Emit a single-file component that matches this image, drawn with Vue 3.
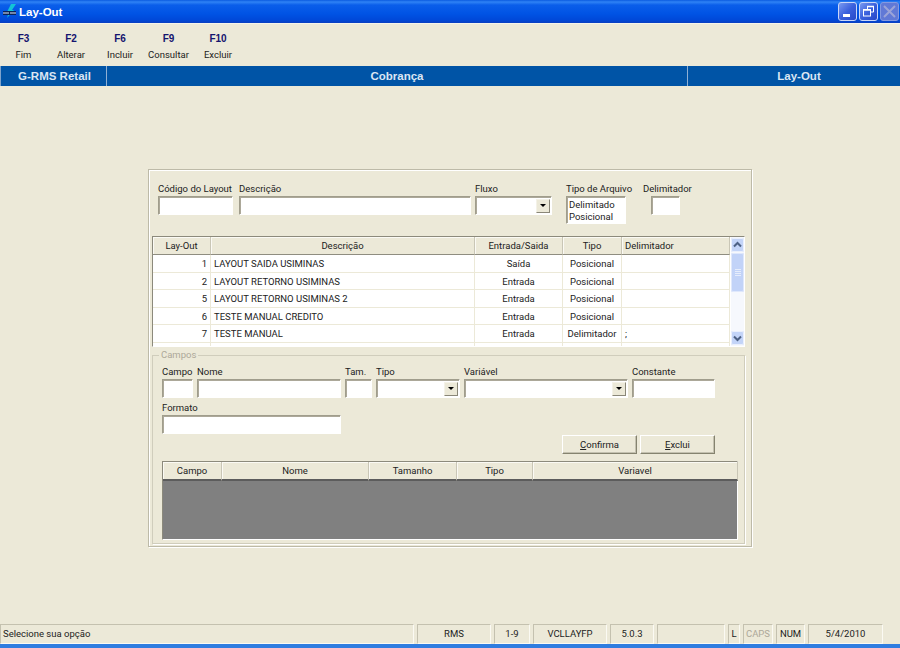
<script setup>
const tools = [
  { key: 'F3', label: 'Fim', w: 47 },
  { key: 'F2', label: 'Alterar', w: 48 },
  { key: 'F6', label: 'Incluir', w: 50 },
  { key: 'F9', label: 'Consultar', w: 47 },
  { key: 'F10', label: 'Excluir', w: 52 },
]
const layoutCols = [
  { t: 'Lay-Out', w: 58 },
  { t: 'Descrição', w: 264 },
  { t: 'Entrada/Saida', w: 88 },
  { t: 'Tipo', w: 59 },
  { t: 'Delimitador', w: 108, left: true },
]
const layoutRows = [
  ['1', 'LAYOUT SAIDA USIMINAS', 'Saída', 'Posicional', ''],
  ['2', 'LAYOUT RETORNO USIMINAS', 'Entrada', 'Posicional', ''],
  ['5', 'LAYOUT RETORNO USIMINAS 2', 'Entrada', 'Posicional', ''],
  ['6', 'TESTE MANUAL CREDITO', 'Entrada', 'Posicional', ''],
  ['7', 'TESTE MANUAL', 'Entrada', 'Delimitador', ';'],
]
const fieldCols = [
  { t: 'Campo', w: 59 },
  { t: 'Nome', w: 147 },
  { t: 'Tamanho', w: 88 },
  { t: 'Tipo', w: 76 },
  { t: 'Variavel', w: 205 },
]
const status = [
  { t: 'Selecione sua opção', w: 414, left: true },
  { t: 'RMS', w: 74 },
  { t: '1-9', w: 36 },
  { t: 'VCLLAYFP', w: 74 },
  { t: '5.0.3', w: 44 },
  { t: '', w: 68 },
  { t: 'L', w: 12 },
  { t: 'CAPS', w: 30, off: true },
  { t: 'NUM', w: 29 },
  { t: '5/4/2010', w: 75 },
]
</script>

<template>
  <div class="window">
    <header class="titlebar">
      <svg class="appicon" width="16" height="16" viewBox="0 0 16 16">
        <path d="M9 0 L14 0 L10 6 L12 6 L5 14 L7 8 L5 8 Z" fill="#12c4d6" />
        <rect x="1" y="7" width="13" height="4" fill="#0a2458" />
        <path d="M2 8v2M4 8v2M6 8v2M9 8v2M11 8v2M13 8v2" stroke="#dfe9fa" stroke-width="1" />
      </svg>
      <span class="title">Lay-Out</span>
      <div class="winbtns">
        <button class="wb" aria-label="Minimizar"><svg width="17" height="17" viewBox="0 0 17 17"><rect x="4" y="11" width="7" height="3" fill="#fff" /></svg></button>
        <button class="wb" aria-label="Restaurar"><svg width="17" height="17" viewBox="0 0 17 17"><path d="M7.5 6V3.5h6v5.5h-2.5" fill="none" stroke="#fff" /><path d="M7 3.5h7" stroke="#fff" stroke-width="1.5" /><rect x="3.5" y="6.5" width="7" height="6.5" fill="none" stroke="#fff" /><path d="M3 7h8" stroke="#fff" stroke-width="1.5" /></svg></button>
        <button class="wb wb-off" aria-label="Fechar"><svg width="17" height="17" viewBox="0 0 17 17"><path d="M3 3l11 11M14 3L3 14" stroke="#9ba4d8" stroke-width="2" fill="none" /></svg></button>
      </div>
    </header>

    <nav class="toolbar">
      <div v-for="t in tools" :key="t.key" class="tool" :style="{ width: t.w + 'px' }">
        <b>{{ t.key }}</b>
        <span>{{ t.label }}</span>
      </div>
    </nav>

    <div class="module">
      <div class="mod mod-a">G-RMS Retail</div>
      <div class="mod mod-b">Cobrança</div>
      <div class="mod mod-c">Lay-Out</div>
    </div>

    <main class="stage">
      <section class="panel">
        <div class="toprow">
          <div class="f" style="width:75px;margin-right:6px"><span>Código do Layout</span><div class="input"></div></div>
          <div class="f" style="width:232px;margin-right:4px"><span>Descrição</span><div class="input"></div></div>
          <div class="f" style="width:77px;margin-right:14px"><span>Fluxo</span><div class="input combo"><div class="arrow"></div></div></div>
          <div class="f" style="width:77px"><span>Tipo de Arquivo</span>
            <div class="input listbox"><p>Delimitado</p><p>Posicional</p></div></div>
          <div class="f delim"><span>Delimitador</span><div class="input"></div></div>
        </div>

        <div class="grid layout">
          <div class="gridbody">
            <div class="ghead">
              <div v-for="c in layoutCols" :key="c.t" class="gh" :class="{ left: c.left }" :style="{ width: c.w + 'px' }">{{ c.t }}</div>
            </div>
            <div v-for="r in layoutRows" :key="r[0]" class="grow">
              <div class="gc right" style="width:58px">{{ r[0] }}</div>
              <div class="gc" style="width:264px">{{ r[1] }}</div>
              <div class="gc center" style="width:88px">{{ r[2] }}</div>
              <div class="gc center" style="width:59px">{{ r[3] }}</div>
              <div class="gc" style="width:108px">{{ r[4] }}</div>
            </div>
            <div class="grow stub">
              <div class="gc" style="width:58px"></div>
              <div class="gc" style="width:264px"></div>
              <div class="gc" style="width:88px"></div>
              <div class="gc" style="width:59px"></div>
              <div class="gc" style="width:108px"></div>
            </div>
          </div>
          <div class="scroll">
            <div class="sb-btn"><svg width="13" height="14" viewBox="0 0 13 14"><path d="M3 8.500l3.500-3.500L10 8.500" stroke="#4d6185" stroke-width="2" fill="none" /></svg></div>
            <div class="sb-thumb"><hr><hr><hr><hr></div>
            <div class="sb-track"></div>
            <div class="sb-btn"><svg width="13" height="14" viewBox="0 0 13 14"><path d="M3 5.500l3.500 3.500L10 5.500" stroke="#4d6185" stroke-width="2" fill="none" /></svg></div>
          </div>
        </div>

        <fieldset class="campos">
          <legend>Campos</legend>
          <div class="row1">
            <div class="f" style="width:31px"><span>Campo</span><div class="input"></div></div>
            <div class="f" style="width:144px"><span>Nome</span><div class="input"></div></div>
            <div class="f" style="width:27px"><span>Tam.</span><div class="input"></div></div>
            <div class="f" style="width:84px"><span>Tipo</span><div class="input combo"><div class="arrow"></div></div></div>
            <div class="f" style="width:164px"><span>Variável</span><div class="input combo"><div class="arrow"></div></div></div>
            <div class="f" style="width:83px"><span>Constante</span><div class="input"></div></div>
          </div>
          <div class="row2">
            <div class="f" style="width:179px"><span>Formato</span><div class="input"></div></div>
          </div>
          <div class="actions">
            <button class="btn"><u>C</u>onfirma</button>
            <button class="btn"><u>E</u>xclui</button>
          </div>
          <div class="grid fields">
            <div class="ghead">
              <div v-for="c in fieldCols" :key="c.t" class="gh" :style="{ width: c.w + 'px' }">{{ c.t }}</div>
            </div>
            <div class="grayarea"></div>
          </div>
        </fieldset>
      </section>
    </main>

    <footer class="statusbar">
      <div v-for="(s, i) in status" :key="i" class="st" :class="{ left: s.left, off: s.off }" :style="{ width: s.w + 'px' }">{{ s.t }}</div>
    </footer>
    <div class="taskline"></div>
  </div>
</template>

<style scoped>
.window {
  width: 900px;
  height: 648px;
  background: #ece9d8;
  display: flex;
  flex-direction: column;
  overflow: hidden;
  font-family: Roboto, "Liberation Sans", Arial, sans-serif;
  font-size: 9.5px;
  color: #222;
}
.titlebar {
  height: 23px;
  flex: none;
  display: flex;
  align-items: center;
  padding-left: 2px;
  background: linear-gradient(to bottom, #0a5be0 0, #2f83f5 2px, #0a5eea 5px, #0053e4 14px, #0048d8 20px, #0a3fc0 23px);
  border-bottom: 1px solid #f6f4ea;
  box-sizing: content-box;
}
.appicon { flex: none; }
.title {
  margin-left: 1px;
  color: #fff;
  font-family: "Liberation Sans", Arial, sans-serif;
  font-size: 11.5px;
  font-weight: bold;
}
.winbtns { margin-left: auto; display: flex; gap: 2px; padding-right: 1px; }
.wb {
  width: 19px;
  height: 19px;
  padding: 0;
  border: 1px solid #c9d6f8;
  border-radius: 3px;
  background: linear-gradient(135deg, #7a9af0 0, #3a60dd 50%, #2648c8 100%);
  display: flex;
  align-items: center;
  justify-content: center;
  overflow: hidden;
}
.wb svg { flex: none; }
.wb-off { background: #6179d6; border-color: #8499e0; }
.toolbar {
  height: 42px;
  flex: none;
  display: flex;
  box-sizing: border-box;
}
.tool {
  display: flex;
  flex-direction: column;
  align-items: center;
  padding-top: 9px;
  gap: 5px;
  white-space: nowrap;
}
.tool b { font-family: "Liberation Sans", Arial, sans-serif; font-size: 10px; color: #14146e; }
.module {
  height: 20px;
  flex: none;
  display: flex;
  background: #0054a6;
  color: #dbe6f3;
  font-family: "Liberation Sans", Arial, sans-serif;
  font-weight: bold;
  font-size: 11.5px;
}
.mod {
  display: flex;
  align-items: center;
  justify-content: center;
  box-sizing: border-box;
  border-right: 1px solid #8fb0d4;
}
.mod-a { width: 107px; border-left: 1px solid #7ea3cc; padding-left: 2px; }
.mod-b { width: 581px; }
.mod-c { width: 212px; border-right: 0; padding-left: 10px; }
.stage {
  flex: 1;
  display: flex;
  justify-content: center;
  padding-top: 83px;
  box-sizing: border-box;
}
.panel {
  width: 604px;
  height: 378px;
  box-sizing: border-box;
  border: 1px solid #bdbaa8;
  box-shadow: inset 1px 1px 0 #fff, 1px 1px 0 #fff;
  padding: 0 3px;
}
.f { flex: none; }
.f > span { display: block; height: 13px; line-height: 12px; white-space: nowrap; }
.input {
  position: relative;
  height: 19px;
  box-sizing: border-box;
  background: #fff;
  border: 1px solid;
  border-color: #a09d8c #fff #fff #a09d8c;
  box-shadow: inset 1px 1px 0 #aca899;
}
.arrow {
  position: absolute;
  right: 1px;
  top: 2px;
  width: 14px;
  height: 14px;
  background: #ece9d8;
  border: 1px solid;
  border-color: #f4f2e8 #8a8778 #8a8778 #f4f2e8;
  box-sizing: border-box;
}
.arrow::after {
  content: "";
  position: absolute;
  left: 2.5px;
  top: 4px;
  border-style: solid;
  border-width: 3.5px 3.5px 0;
  border-color: #000 transparent transparent;
}
.toprow {
  display: flex;
  padding: 13px 0 0 6px;
  height: 66px;
  box-sizing: border-box;
}
.listbox {
  width: 60px;
  height: 28px;
  padding: 2px 0 0 2px;
}
.listbox p { margin: 0; height: 12px; line-height: 12px; }
.delim { width: 45px; }
.delim .input { width: 29px; margin-left: 8px; }
.grid { box-sizing: border-box; }
.layout {
  width: 593px;
  height: 111px;
  display: flex;
  border: 1px solid #8c8a7c;
  border-right-color: #fff;
  border-bottom-color: #fff;
  overflow: hidden;
  background: #fff;
}
.gridbody { width: 577px; flex: none; overflow: hidden; }
.ghead { display: flex; height: 18px; flex: none; }
.gh {
  box-sizing: border-box;
  flex: none;
  height: 18px;
  line-height: 17px;
  text-align: center;
  background: #ece9d8;
  border-right: 1px solid #c9c6b6;
  border-bottom: 1px solid #8f8d80;
  box-shadow: inset 1px 1px 0 #fbfaf4;
}
.gh.left { text-align: left; padding-left: 3px; }
.grow { display: flex; height: 17.5px; }
.gc {
  flex: none;
  box-sizing: border-box;
  height: 100%;
  line-height: 17px;
  padding: 0 3px;
  border-right: 1px solid #ece9d8;
  border-bottom: 1px solid #ece9d8;
  white-space: nowrap;
  overflow: hidden;
}
.right { text-align: right; }
.center { text-align: center; }
.scroll {
  width: 13px;
  flex: none;
  margin-left: 1px;
  display: flex;
  flex-direction: column;
  background: #f6f8fd;
  height: 109px;
  padding: 1px 0;
  box-sizing: border-box;
}
.sb-btn {
  height: 14px;
  flex: none;
  background: #c3d4f8;
  border-radius: 2px;
  box-shadow: inset 0 0 0 1px #eaf0fd;
}
.sb-btn svg { display: block; }
.sb-thumb {
  height: 39px;
  margin-top: 1px;
  flex: none;
  background: #c2d3f8;
  border-radius: 2px;
  box-shadow: inset 0 0 0 1px #dfe8fc;
  display: flex;
  flex-direction: column;
  justify-content: center;
  align-items: center;
  gap: 1px;
}
.sb-thumb hr { width: 6px; height: 1px; border: 0; margin: 0; background: #e6edfc; }
.sb-track { flex: 1; }
.campos {
  width: 593px;
  height: 194px;
  box-sizing: border-box;
  margin: 3px 0 0;
  padding: 0 0 0 9px;
  border: 1px solid #d0cdbc;
  box-shadow: 1px 1px 0 #fff;
  min-width: 0;
}
legend {
  padding: 0 2px;
  margin-left: -3px;
  color: #aca899;
  line-height: 10px;
  height: 10px;
}
.row1 { display: flex; gap: 4px; margin-top: 6px; }
.row2 { margin-top: 3px; }
.row2 .f > span { height: 14px; line-height: 13px; }
.actions {
  display: flex;
  gap: 3px;
  margin: 1px 0 0 400px;
}
.btn {
  width: 75px;
  height: 19px;
  padding: 0;
  font: inherit;
  color: #222;
  background: #ece9d8;
  border: 1px solid;
  border-color: #fff #85836f #85836f #fff;
  box-shadow: inset -1px -1px 0 #c4c1b0;
}
.fields {
  width: 576px;
  height: 79px;
  margin-top: 7px;
  border: 1px solid #8c8a7c;
  border-right-color: #fff;
  border-bottom-color: #fff;
  display: flex;
  flex-direction: column;
}
.fields .gh { border-bottom: 2px solid #5c5c5c; height: 19px; }
.fields .ghead { height: 19px; }
.grayarea { flex: 1; background: #808080; }
.statusbar {
  height: 20px;
  flex: none;
  display: flex;
  gap: 3px;
}
.st {
  flex: none;
  box-sizing: border-box;
  height: 20px;
  line-height: 18px;
  text-align: center;
  border: 1px solid;
  border-color: #c4c1af #fbfaf3 #fbfaf3 #c4c1af;
  white-space: nowrap;
  overflow: hidden;
}
.st.left { text-align: left; padding-left: 2px; }
.st.off { color: #aca899; }
.taskline { height: 4px; flex: none; background: #2f7de0; }
</style>
